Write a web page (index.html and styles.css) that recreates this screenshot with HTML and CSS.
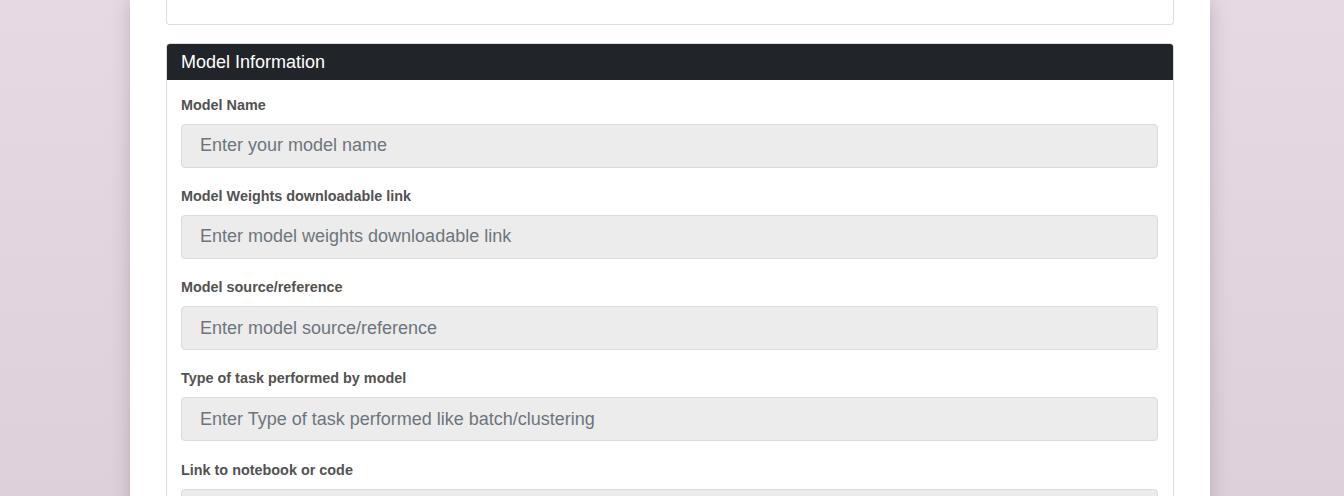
FILE: index.html
```html
<!DOCTYPE html>
<html lang="en">
<head>
<meta charset="utf-8">
<title>Model Information</title>
<link rel="stylesheet" href="styles.css">
</head>
<body>
<div class="page">
  <div class="card card-prev"></div>
  <div class="card">
    <div class="card-header">Model Information</div>
    <div class="card-body">
      <div class="form-group">
        <label class="form-label" for="mname">Model Name</label>
        <input class="form-control" id="mname" type="text" placeholder="Enter your model name">
      </div>
      <div class="form-group">
        <label class="form-label" for="mweights">Model Weights downloadable link</label>
        <input class="form-control" id="mweights" type="text" placeholder="Enter model weights downloadable link">
      </div>
      <div class="form-group">
        <label class="form-label" for="msource">Model source/reference</label>
        <input class="form-control" id="msource" type="text" placeholder="Enter model source/reference">
      </div>
      <div class="form-group">
        <label class="form-label" for="mtask">Type of task performed by model</label>
        <input class="form-control" id="mtask" type="text" placeholder="Enter Type of task performed like batch/clustering">
      </div>
      <div class="form-group">
        <label class="form-label" for="mcode">Link to notebook or code</label>
        <input class="form-control" id="mcode" type="text" placeholder="Enter link to notebook or code">
      </div>
    </div>
  </div>
</div>
</body>
</html>
```

FILE: styles.css
```css
html, body {
  margin: 0;
  padding: 0;
}
body {
  min-height: 100vh;
  background: linear-gradient(180deg, #e6d9e4 0%, #dccfd9 100%);
  font-family: "Liberation Sans", Arial, sans-serif;
  overflow: hidden;
}
.page {
  width: 1080px;
  margin: 0 0 0 calc(50% - 542px);
  min-height: 100vh;
  background: #ffffff;
  box-shadow: 0 0 18px rgba(60, 30, 60, 0.22);
  padding: 0 36px;
  box-sizing: border-box;
}
.card {
  border: 1px solid #dddddd;
  border-radius: 4px;
  background: #ffffff;
  margin-bottom: 18px;
}
.card-prev {
  border-top: 0;
  border-radius: 0 0 4px 4px;
  height: 24px;
}
.card-header {
  background: #212529;
  color: #ffffff;
  font-size: 18px;
  line-height: 36px;
  padding: 0 14px;
  border-radius: 3px 3px 0 0;
}
.card-body {
  padding: 14.5px 15px 0 14px;
}
.form-group {
  display: flex;
  flex-direction: column;
  margin-bottom: 18.25px;
}
.form-label {
  font-size: 14.4px;
  font-weight: 700;
  line-height: 20px;
  color: #525252;
  margin-bottom: 9px;
}
.form-control {
  height: 44px;
  box-sizing: border-box;
  border: 1px solid #dcdcdc;
  border-radius: 4px;
  background: #ececec;
  padding: 0 18px;
  font-family: "Liberation Sans", Arial, sans-serif;
  font-size: 18px;
  color: #333;
  outline: none;
}
.form-control::placeholder {
  color: #6c757d;
  opacity: 1;
}
```
